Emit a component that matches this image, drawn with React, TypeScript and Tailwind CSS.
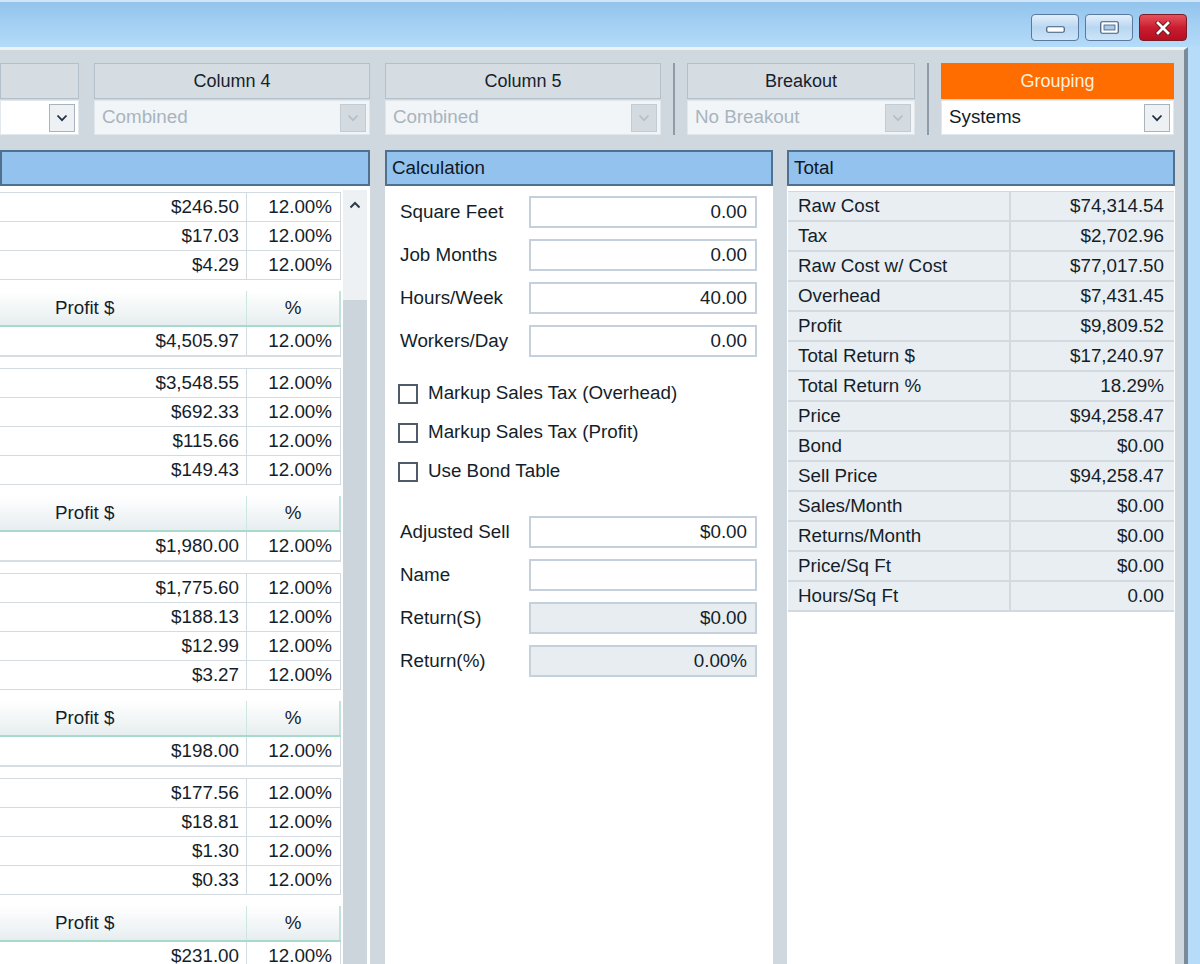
import React from "react";

type PickerProps = {
  title: string;
  value: string;
  width: string;
  disabled?: boolean;
  accent?: boolean;
};

function Chevron({ disabled }: { disabled?: boolean }) {
  return (
    <svg width="12" height="8" viewBox="0 0 12 8" fill="none">
      <path d="M1.5 1.5 L6 6.2 L10.5 1.5" stroke={disabled ? "#b4bfc8" : "#1e2f42"} strokeWidth="1.8" />
    </svg>
  );
}

function Picker({ title, value, width, disabled, accent }: PickerProps) {
  return (
    <div className={`flex flex-col ${width}`}>
      <div
        className={`h-[36px] flex items-center justify-center border text-[18px] ${
          accent ? "bg-[#ff6c00] border-[#ff6c00] text-[#fff0de]" : "bg-[#d5dde3] border-[#b3bfc9] text-[#17212d]"
        }`}
      >
        {title}
      </div>
      <div
        className={`mt-[1px] h-[35px] flex items-center border ${
          disabled ? "bg-[#f2f5f7] border-[#e0e6ea] text-[#a7b4bf]" : "bg-white border-[#e3e8ec] text-[#121b26]"
        }`}
      >
        <span className="flex-1 pl-[7px] whitespace-nowrap overflow-hidden">{value}</span>
        <div
          className={`w-[26px] h-[28px] mr-[3px] border flex items-center justify-center ${
            disabled ? "bg-[#d3dbe1] border-[#c2ccd4]" : "bg-[#eef1f4] border-[#a7b3bd]"
          }`}
        >
          <Chevron disabled={disabled} />
        </div>
      </div>
    </div>
  );
}

function Separator() {
  return <div className="w-[2px] h-[72px] bg-[#8f9ca8]" />;
}

function PanelHeader({ title }: { title?: string }) {
  return (
    <div className="h-[36px] bg-[#94c2ef] border-2 border-[#50708f] flex items-center pl-[5px] text-[#0f1824]">
      {title}
    </div>
  );
}

function DataRow({ amount }: { amount: string }) {
  return (
    <div className="flex h-[29px] border-b border-[#d3dbe1] items-center">
      <div className="w-[247px] h-full border-r border-[#d3dbe1] flex items-center justify-end pr-[7px]">{amount}</div>
      <div className="flex-1 text-right pr-[8px]">12.00%</div>
    </div>
  );
}

function ProfitHeader() {
  return (
    <div className="flex h-[36px] border-b-2 border-[#a7dacd] bg-gradient-to-b from-white to-[#e7eef0]">
      <div className="w-[247px] border-r border-[#cde6df] flex items-center pl-[55px]">Profit $</div>
      <div className="flex-1 border-r-2 border-[#c3e2da] flex items-center justify-center">%</div>
    </div>
  );
}

function Cluster({ rows, profit, first }: { rows: string[]; profit: string; first?: boolean }) {
  return (
    <div className={first ? "" : "mt-[11px]"}>
      <div className="border-t border-r border-[#d3dbe1]">
        {rows.map((r) => (
          <DataRow key={r} amount={r} />
        ))}
      </div>
      <div className="mt-[11px]">
        <ProfitHeader />
        <div className="border-r border-[#d3dbe1]">
          <div className="flex h-[30px] border-b-2 border-[#d7dee3] items-center">
            <div className="w-[247px] h-full border-r border-[#d3dbe1] flex items-center justify-end pr-[7px]">{profit}</div>
            <div className="flex-1 text-right pr-[8px]">12.00%</div>
          </div>
        </div>
      </div>
    </div>
  );
}

function Field({ label, value, readOnly }: { label: string; value?: string; readOnly?: boolean }) {
  return (
    <div className="flex items-center h-[32px] mb-[11px]">
      <div className="w-[144px] pl-[15px]">{label}</div>
      <div
        className={`w-[228px] h-[32px] border-2 border-[#c4d1dc] flex items-center justify-end pr-[8px] ${
          readOnly ? "bg-[#e8edf1]" : "bg-white"
        }`}
      >
        {value}
      </div>
    </div>
  );
}

function Check({ label }: { label: string }) {
  return (
    <div className="flex items-center h-[39px] pl-[13px]">
      <div className="w-[20px] h-[20px] border-2 border-[#4f5b68] bg-white" />
      <span className="ml-[10px]">{label}</span>
    </div>
  );
}

const totals: [string, string][] = [
  ["Raw Cost", "$74,314.54"],
  ["Tax", "$2,702.96"],
  ["Raw Cost w/ Cost", "$77,017.50"],
  ["Overhead", "$7,431.45"],
  ["Profit", "$9,809.52"],
  ["Total Return $", "$17,240.97"],
  ["Total Return %", "18.29%"],
  ["Price", "$94,258.47"],
  ["Bond", "$0.00"],
  ["Sell Price", "$94,258.47"],
  ["Sales/Month", "$0.00"],
  ["Returns/Month", "$0.00"],
  ["Price/Sq Ft", "$0.00"],
  ["Hours/Sq Ft", "0.00"],
];

export default function App() {
  return (
    <div className="w-[1200px] h-[964px] overflow-hidden bg-[#b6dcf9] font-['Liberation_Sans',Arial,sans-serif] text-[18.8px] text-[#141e2a]">
      {/* title bar */}
      <div className="h-[47px] border-t-2 border-[#d0e6f7] bg-gradient-to-b from-[#93c4ed] to-[#b4dbf8] flex justify-end items-start pt-[12px] pr-[13px] gap-[6px]">
        <div className="w-[48px] h-[27px] rounded-[4px] border border-[#5b789f] bg-gradient-to-b from-[#e2effa] via-[#b9d7f1] to-[#cbe5f9] flex items-end justify-center pb-[7px]">
          <svg width="19" height="7" viewBox="0 0 19 7">
            <rect x="0.75" y="0.75" width="17.5" height="5.5" rx="1.5" fill="#ffffff" stroke="#3f5b80" strokeWidth="1.2" />
          </svg>
        </div>
        <div className="w-[48px] h-[27px] rounded-[4px] border border-[#5b789f] bg-gradient-to-b from-[#e2effa] via-[#b9d7f1] to-[#cbe5f9] flex items-center justify-center">
          <svg width="19" height="13" viewBox="0 0 19 13">
            <rect x="0.75" y="0.75" width="17.5" height="11.5" rx="1.5" fill="#ffffff" stroke="#3f5b80" strokeWidth="1.2" />
            <rect x="4" y="4" width="11" height="5" fill="#a9c9e6" stroke="#3f5b80" strokeWidth="0.8" />
          </svg>
        </div>
        <div className="w-[48px] h-[27px] rounded-[4px] border border-[#7c1b26] bg-gradient-to-b from-[#e6505c] via-[#c91d30] to-[#b70d22] flex items-center justify-center">
          <svg width="16" height="14" viewBox="0 0 16 14">
            <path d="M3 2 L13 12 M13 2 L3 12" stroke="#5a0d16" strokeWidth="4.4" strokeLinecap="square" />
            <path d="M3 2 L13 12 M13 2 L3 12" stroke="#ffffff" strokeWidth="2.8" strokeLinecap="square" />
          </svg>
        </div>
      </div>

      {/* window body */}
      <div className="w-[1188px] h-[917px] overflow-hidden bg-[#cfd8de] border-t-[3px] border-t-[#eef3f6] border-r-[4px] border-r-[#7b8a99]">
        {/* pickers */}
        <div className="flex items-start pt-[13px]">
          <Picker title="" value="" width="w-[79px]" />
          <div className="ml-[15px]">
            <Picker title="Column 4" value="Combined" width="w-[276px]" disabled />
          </div>
          <div className="ml-[15px]">
            <Picker title="Column 5" value="Combined" width="w-[276px]" disabled />
          </div>
          <div className="ml-[12px]">
            <Separator />
          </div>
          <div className="ml-[12px]">
            <Picker title="Breakout" value="No Breakout" width="w-[228px]" disabled />
          </div>
          <div className="ml-[12px]">
            <Separator />
          </div>
          <div className="ml-[12px]">
            <Picker title="Grouping" value="Systems" width="w-[233px]" accent />
          </div>
        </div>

        {/* panels */}
        <div className="flex items-start mt-[15px]">
          {/* left grid */}
          <div className="w-[370px] flex flex-col">
            <PanelHeader />
            <div className="h-[800px] bg-white flex">
              <div className="w-[341px] pt-[6px]">
                <Cluster first rows={["$246.50", "$17.03", "$4.29"]} profit="$4,505.97" />
                <Cluster rows={["$3,548.55", "$692.33", "$115.66", "$149.43"]} profit="$1,980.00" />
                <Cluster rows={["$1,775.60", "$188.13", "$12.99", "$3.27"]} profit="$198.00" />
                <Cluster rows={["$177.56", "$18.81", "$1.30", "$0.33"]} profit="$231.00" />
              </div>
              <div className="ml-[2px] mt-[4px] w-[24px] flex flex-col bg-[#eef1f3]">
                <div className="h-[30px] flex items-center justify-center">
                  <svg width="12" height="8" viewBox="0 0 12 8" fill="none">
                    <path d="M1.5 6.5 L6 2 L10.5 6.5" stroke="#2d3b4a" strokeWidth="2" />
                  </svg>
                </div>
                <div className="h-[80px]" />
                <div className="flex-1 bg-[#ccd5dc]" />
              </div>
            </div>
          </div>

          {/* calculation */}
          <div className="ml-[15px] w-[388px] flex flex-col">
            <PanelHeader title="Calculation" />
            <div className="h-[800px] bg-white pt-[10px]">
              <Field label="Square Feet" value="0.00" />
              <Field label="Job Months" value="0.00" />
              <Field label="Hours/Week" value="40.00" />
              <Field label="Workers/Day" value="0.00" />
              <div className="mt-[17px]">
                <Check label="Markup Sales Tax (Overhead)" />
                <Check label="Markup Sales Tax (Profit)" />
                <Check label="Use Bond Table" />
              </div>
              <div className="mt-[25px]">
                <Field label="Adjusted Sell" value="$0.00" />
                <Field label="Name" value="" />
                <Field label="Return(S)" value="$0.00" readOnly />
                <Field label="Return(%)" value="0.00%" readOnly />
              </div>
            </div>
          </div>

          {/* total */}
          <div className="ml-[14px] w-[388px] flex flex-col">
            <PanelHeader title="Total" />
            <div className="h-[800px] bg-white pt-[5px] px-[1px]">
              <div className="border-t border-[#d0d8de]">
                {totals.map(([k, v]) => (
                  <div key={k} className="flex h-[30px] bg-[#e9eef2] border-b-2 border-[#d2dae0] items-center">
                    <div className="w-[223px] h-full border-r-2 border-[#d2dae0] flex items-center pl-[10px]">{k}</div>
                    <div className="flex-1 text-right pr-[10px]">{v}</div>
                  </div>
                ))}
              </div>
            </div>
          </div>
        </div>
      </div>
    </div>
  );
}
